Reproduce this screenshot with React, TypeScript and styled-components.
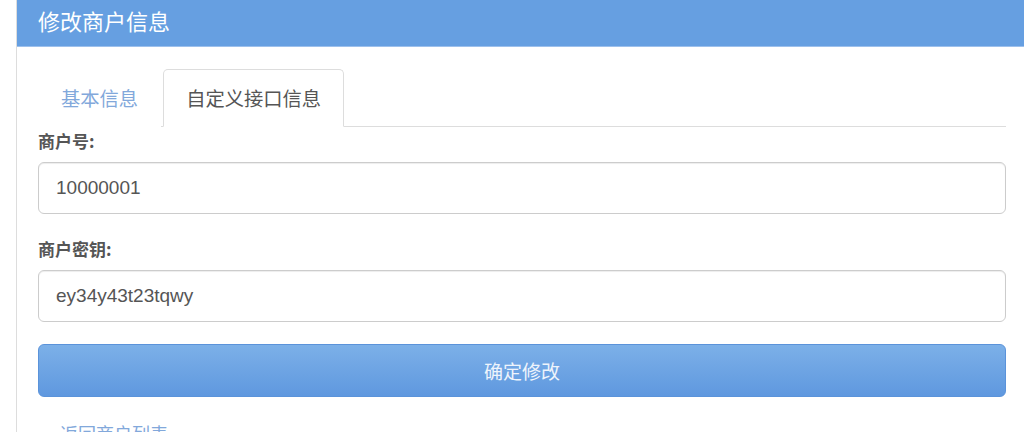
import React, { useState } from "react";
import styled, { createGlobalStyle } from "styled-components";

const GlobalStyle = createGlobalStyle`
  html, body {
    margin: 0;
    padding: 0;
    background: #ffffff;
  }
  body {
    font-family: "Liberation Sans", "Noto Sans CJK SC", sans-serif;
    color: #555;
  }
`;

const Panel = styled.div`
  margin-left: 16px;
  border-left: 1px solid #dddddd;
  min-height: 432px;
`;

const PanelHeading = styled.div`
  background-color: #669fe1;
  border-bottom: 1px solid #9dc0ec;
  height: 46px;
  padding: 0 21px;
  display: flex;
  align-items: center;
`;

const PanelTitle = styled.h3`
  margin: 0;
  font-size: 22px;
  font-weight: normal;
  color: #ffffff;
  font-family: "Noto Sans CJK SC", sans-serif;
  line-height: 1;
  position: relative;
  top: -3px;
`;

const PanelBody = styled.div`
  padding: 22px 18px 0 21px;
`;

const TabList = styled.ul`
  list-style: none;
  margin: 0;
  padding: 0;
  display: flex;
  border-bottom: 1px solid #dddddd;
`;

const Tab = styled.li<{ $active?: boolean }>`
  margin-bottom: -1px;
  padding: 0 22px;
  height: 56px;
  display: flex;
  align-items: center;
  font-family: "Noto Sans CJK SC", sans-serif;
  font-size: 19.3px;
  cursor: pointer;
  border: 1px solid ${(p) => (p.$active ? "#dddddd" : "transparent")};
  border-bottom-color: ${(p) => (p.$active ? "#ffffff" : "transparent")};
  border-radius: 5px 5px 0 0;
  background: #ffffff;
  color: ${(p) => (p.$active ? "#555555" : "#82a8db")};
  margin-right: 2px;
`;

const FormGroup = styled.div`
  margin-bottom: 21px;
`;

const Label = styled.label`
  display: block;
  height: 27px;
  line-height: 27px;
  margin-bottom: 8px;
  font-size: 17px;
  font-weight: bold;
  color: #555555;
  font-family: "Noto Sans CJK SC", sans-serif;
`;

const Input = styled.input`
  display: block;
  box-sizing: border-box;
  width: 100%;
  height: 52px;
  padding: 0 17px;
  font-size: 19px;
  font-family: "Liberation Sans", Arial, sans-serif;
  color: #555555;
  border: 1px solid #cccccc;
  border-radius: 6px;
  box-shadow: inset 0 1px 1px rgba(0, 0, 0, 0.075);
  outline: none;
  background: #ffffff;
`;

const SubmitButton = styled.button`
  display: block;
  width: 100%;
  height: 53px;
  margin-top: 22px;
  border: 1px solid #5b93da;
  border-radius: 6px;
  background: linear-gradient(to bottom, #7cb0e8 0%, #5f98df 100%);
  color: #eef4fc;
  font-size: 19px;
  font-family: "Noto Sans CJK SC", sans-serif;
  cursor: pointer;
`;

const BackLink = styled.a`
  display: block;
  margin-top: 23px;
  padding-left: 22px;
  font-size: 18px;
  font-family: "Noto Sans CJK SC", sans-serif;
  color: #82a8db;
  text-decoration: none;
`;

const App = () => {
  const [tab, setTab] = useState(1);
  const [merchantId, setMerchantId] = useState("10000001");
  const [merchantKey, setMerchantKey] = useState("ey34y43t23tqwy");

  return (
    <>
      <GlobalStyle />
      <Panel>
        <PanelHeading>
          <PanelTitle>修改商户信息</PanelTitle>
        </PanelHeading>
        <PanelBody>
          <TabList>
            <Tab $active={tab === 0} onClick={() => setTab(0)}>
              基本信息
            </Tab>
            <Tab $active={tab === 1} onClick={() => setTab(1)}>
              自定义接口信息
            </Tab>
          </TabList>
          <FormGroup>
            <Label>商户号:</Label>
            <Input
              value={merchantId}
              onChange={(e) => setMerchantId(e.target.value)}
            />
          </FormGroup>
          <FormGroup>
            <Label>商户密钥:</Label>
            <Input
              value={merchantKey}
              onChange={(e) => setMerchantKey(e.target.value)}
            />
          </FormGroup>
          <SubmitButton>确定修改</SubmitButton>
          <BackLink href="#">返回商户列表</BackLink>
        </PanelBody>
      </Panel>
    </>
  );
};

export default App;
